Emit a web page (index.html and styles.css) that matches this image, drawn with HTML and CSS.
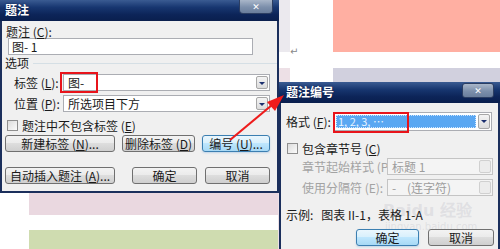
FILE: index.html
```html
<!DOCTYPE html>
<html lang="zh-CN">
<head>
  <meta charset="UTF-8">
  <title>题注</title>
  <link rel="stylesheet" href="styles.css">
</head>
<body>

  <!-- document behind the dialogs -->
  <div class="doc">
    <div class="cell strip"></div>
    <div class="cell salmon"></div>
    <div class="cell mark">↵</div>
    <div class="cell strip-pink"></div>
    <div class="cell lavender"></div>
    <div class="cell pink"></div>
    <div class="cell green"></div>
  </div>

  <!-- Caption dialog -->
  <div class="win win-caption">
    <div class="titlebar">
      <span class="title">题注</span>
      <span class="close">✕</span>
    </div>
    <div class="body">
      <div class="label">题注 (<u>C</u>):</div>
      <div class="textbox">图- 1</div>

      <div class="group-head"><span>选项</span><span class="rule"></span></div>

      <div class="field">
        <span class="flabel">标签 (<u>L</u>):</span>
        <div class="combo">
          <span class="value">图-</span>
          <span class="drop"></span>
          <span class="redbox red-label"></span>
        </div>
      </div>
      <div class="field">
        <span class="flabel">位置 (<u>P</u>):</span>
        <div class="combo">
          <span class="value">所选项目下方</span>
          <span class="drop"></span>
        </div>
      </div>

      <div class="check-row">
        <span class="checkbox"></span>
        <span>题注中不包含标签 (<u>E</u>)</span>
      </div>

      <div class="btn-row row-top">
        <span class="btn w-new">新建标签 (<u>N</u>)...</span>
        <span class="btn w-del">删除标签 (<u>D</u>)</span>
        <span class="btn btn-hot w-num">编号 (<u>U</u>)...</span>
      </div>
      <div class="btn-row row-bottom">
        <span class="btn w-new">自动插入题注 (<u>A</u>)...</span>
        <span class="btn w-ok">确定</span>
        <span class="btn w-cancel">取消</span>
      </div>
    </div>
  </div>

  <!-- Caption numbering dialog -->
  <div class="win win-number">
    <div class="titlebar">
      <span class="title">题注编号</span>
      <span class="close">✕</span>
    </div>
    <div class="body">
      <div class="watermark">
        <span class="wm-big">Bai<b>du</b> 经验</span>
        <span class="wm-small">jingyan.baidu.com</span>
      </div>

      <div class="field">
        <span class="flabel f-format">格式 (<u>F</u>):</span>
        <div class="combo combo-tall c-format">
          <span class="value selected">1, 2, 3, …</span>
          <span class="drop"></span>
          <span class="redbox red-format"></span>
        </div>
      </div>

      <div class="check-row chapter">
        <span class="checkbox"></span>
        <span>包含章节号 (<u>C</u>)</span>
      </div>

      <div class="field sub">
        <span class="flabel f-sub disabled">章节起始样式 (P)</span>
        <div class="combo c-sub off">
          <span class="value">标题 1</span>
          <span class="drop"></span>
        </div>
      </div>
      <div class="field sub">
        <span class="flabel f-sub disabled">使用分隔符 (E):</span>
        <div class="combo c-sub off">
          <span class="value">-&nbsp;&nbsp;&nbsp;&nbsp;(连字符)</span>
          <span class="drop"></span>
        </div>
      </div>

      <div class="example">
        <span class="ex-label">示例:</span>
        <span>图表 II-1，表格 1-A</span>
      </div>

      <div class="btn-row row-end">
        <span class="btn btn-hot w-ok2">确定</span>
        <span class="btn w-cancel2">取消</span>
      </div>
    </div>
  </div>

  <!-- red annotation arrow -->
  <svg class="arrow" width="500" height="249" viewBox="0 0 500 249">
    <line x1="230" y1="140" x2="272" y2="105" stroke="#ee1c1c" stroke-width="2.2"/>
    <polygon points="284,95 267,102 275,111" fill="#ee1c1c"/>
  </svg>

</body>
</html>
```

FILE: styles.css
```css
body {
  margin: 0;
  width: 500px;
  height: 249px;
  overflow: hidden;
  position: relative;
  background-color: #fff;
  font-family: "Noto Sans CJK SC", "DejaVu Sans", sans-serif;
  font-size: 12px;
  color: #1a1a1a;
}

u {
  text-decoration: underline;
  text-underline-offset: 1px;
}

/* document */
.doc {
  display: grid;
  grid-template-columns: 29px 249px 12px 43px 167px;
  grid-template-rows: 52px 16px 125px 22px 15px 19px;
  width: 500px;
  height: 249px;
}

.strip {
  grid-column: 3;
  grid-row: 1;
  background-color: #ebe9ee;
}

.salmon {
  grid-column: 5;
  grid-row: 1;
  background-color: #ffafa2;
}

.mark {
  grid-column: 3 / 5;
  grid-row: 2;
  color: #888;
  font-size: 10px;
  line-height: 10px;
  padding-left: 12px;
  margin-top: -6px;
}

.strip-pink {
  grid-column: 3;
  grid-row: 3 / 7;
  background-color: #ede0e6;
}

.lavender {
  grid-column: 5;
  grid-row: 3 / 7;
  background-color: #d1d0de;
}

.pink {
  grid-column: 2;
  grid-row: 4;
  background-color: #ead8e0;
}

.green {
  grid-column: 2;
  grid-row: 6;
  background-color: #cfdcb0;
}

/* windows */
.win {
  position: absolute;
  box-sizing: border-box;
  background-color: #f0f0f0;
  border: 2px solid #1b2f5c;
  border-top: none;
}

.win-caption {
  left: 0;
  top: 0;
  width: 279px;
  height: 193px;
}

.win-number {
  left: 279px;
  top: 82px;
  width: 221px;
  height: 175px;
}

.titlebar {
  display: flex;
  align-items: flex-start;
  height: 21px;
  margin: 0 -2px;
  background: linear-gradient(#3a5b92 0%, #173670 35%, #0c2458 70%, #0a1f4e 100%);
}

.title {
  color: #fff;
  font-weight: bold;
  font-size: 12px;
  line-height: 20px;
  padding-left: 5px;
  text-shadow: 0 0 2px #0a1a40;
}

.win-number .title {
  padding-left: 7px;
}

.close {
  margin-left: auto;
  margin-right: 6px;
  width: 34px;
  height: 14px;
  box-sizing: border-box;
  border: 1px solid #2c3e62;
  border-top: none;
  border-radius: 0 0 4px 4px;
  background: linear-gradient(#a9b6c9, #7c8fab 55%, #6a7e9c);
  color: #fff;
  font-size: 9px;
  font-weight: bold;
  line-height: 13px;
  text-align: center;
}

.win-number .close {
  width: 32px;
  height: 15px;
  margin-right: 6px;
  margin-top: 1px;
  border-top: 1px solid #2c3e62;
  border-radius: 3px;
}

.body {
  position: relative;
  padding: 4px 0 0 3px;
}

.win-number .body {
  padding: 4px 4px 0 5px;
}

.label {
  margin-left: 1px;
  line-height: 13px;
}

.textbox {
  box-sizing: border-box;
  width: 245px;
  height: 17px;
  margin: 0 0 0 3px;
  padding-left: 3px;
  background-color: #fff;
  border: 1px solid #abadb3;
  line-height: 15px;
}

.group-head {
  display: flex;
  align-items: center;
  height: 12px;
  margin-top: 2px;
  line-height: 12px;
}

.rule {
  flex: 1;
  margin-left: 4px;
  border-top: 1px solid #d5dfe5;
}

.field {
  display: flex;
  align-items: center;
  margin-top: 5px;
}

.field + .field {
  margin-top: 4px;
}

.flabel {
  box-sizing: border-box;
  width: 58px;
  padding-left: 9px;
}

.combo {
  position: relative;
  box-sizing: border-box;
  display: flex;
  width: 207px;
  height: 17px;
  background-color: #fff;
  border: 1px solid #abadb3;
  line-height: 15px;
}

.value {
  flex: 1;
  padding-left: 4px;
  white-space: nowrap;
}

.drop {
  width: 12px;
  margin: 1px;
  background: linear-gradient(#f4f4f4, #dcdcdc);
  border: 1px solid #a7a7a7;
  border-radius: 2px;
  box-sizing: border-box;
  position: relative;
}

.drop::after {
  content: "";
  position: absolute;
  left: 2px;
  top: 5px;
  border-left: 3px solid transparent;
  border-right: 3px solid transparent;
  border-top: 3px solid #1b2f6e;
}

.redbox {
  position: absolute;
  box-sizing: border-box;
  border: 2px solid #e8141b;
}

.red-label {
  left: -4px;
  top: -3px;
  width: 38px;
  height: 21px;
}

.check-row {
  display: flex;
  align-items: center;
  gap: 4px;
  height: 12px;
  margin: 7px 0 0 2px;
}

.checkbox {
  box-sizing: border-box;
  width: 11px;
  height: 11px;
  border: 1px solid #8f8f8f;
  background: linear-gradient(135deg, #dcdcdc, #fbfbfb);
}

.btn-row {
  display: flex;
}

.row-top {
  margin-top: 4px;
}

.row-bottom {
  margin-top: 15px;
}

.btn {
  position: relative;
  box-sizing: border-box;
  height: 17px;
  border: 1px solid #707070;
  border-radius: 3px;
  background: linear-gradient(#f3f3f3 0%, #ebebeb 45%, #dddddd 50%, #cfcfcf 100%);
  line-height: 15px;
  text-align: center;
  white-space: nowrap;
}

.btn-hot {
  border-color: #3c7fb1;
  background: linear-gradient(#eaf6fd 0%, #d9f0fc 45%, #bee6fd 50%, #a7d9f5 100%);
  box-shadow: 0 1px 2px rgba(120, 170, 220, 0.4);
}

.w-new { width: 110px; }
.w-del { width: 73px; margin-left: 7px; }
.w-num { width: 68px; margin-left: 7px; }
.w-ok { width: 65px; margin-left: 17px; }
.w-cancel { width: 65px; margin-left: 8px; }

/* numbering dialog */
.f-format {
  width: 47px;
  padding-left: 0;
}

.combo-tall {
  height: 19px;
  line-height: 17px;
}

.c-format {
  width: 159px;
}

.selected {
  margin: 2px 1px 2px 2px;
  padding-left: 2px;
  background-color: #5aa7f2;
  color: #e8f3ff;
  outline: 1px dotted #cfe6ff;
  outline-offset: -1px;
  line-height: 13px;
  font-size: 11px;
}

.red-format {
  left: -1px;
  top: -1px;
  width: 76px;
  height: 21px;
}

.chapter {
  margin: 12px 0 0 1px;
  height: 11px;
}

.field.sub {
  margin-top: 4px;
}

.f-sub {
  width: 101px;
  padding-left: 16px;
  white-space: nowrap;
}

.disabled {
  color: #a3a3a3;
}

.c-sub {
  width: 106px;
}

.combo.off {
  background-color: #f4f4f4;
  border-color: #c4c4c4;
  color: #9d9d9d;
}

.combo.off .drop {
  background: #ececec;
  border-color: #d0d0d0;
}

.combo.off .drop::after {
  display: none;
}

.example {
  position: relative;
  display: flex;
  gap: 8px;
  margin-top: 12px;
  line-height: 14px;
}

.row-end {
  justify-content: flex-end;
  margin-top: 7px;
}

.w-ok2 { width: 63px; }
.w-cancel2 { width: 66px; margin-left: 9px; }

/* faint site watermark lying over the dialog */
.watermark {
  position: absolute;
  left: 102px;
  top: 98px;
  display: flex;
  flex-direction: column;
  color: rgba(185, 185, 195, 0.3);
  pointer-events: none;
}

.wm-big {
  font-family: "DejaVu Sans", sans-serif;
  font-size: 16px;
  line-height: 20px;
  font-weight: bold;
}

.wm-small {
  font-family: "DejaVu Sans", sans-serif;
  font-size: 10px;
  line-height: 12px;
  padding-left: 2px;
}

.arrow {
  position: absolute;
  left: 0;
  top: 0;
  pointer-events: none;
}
```
